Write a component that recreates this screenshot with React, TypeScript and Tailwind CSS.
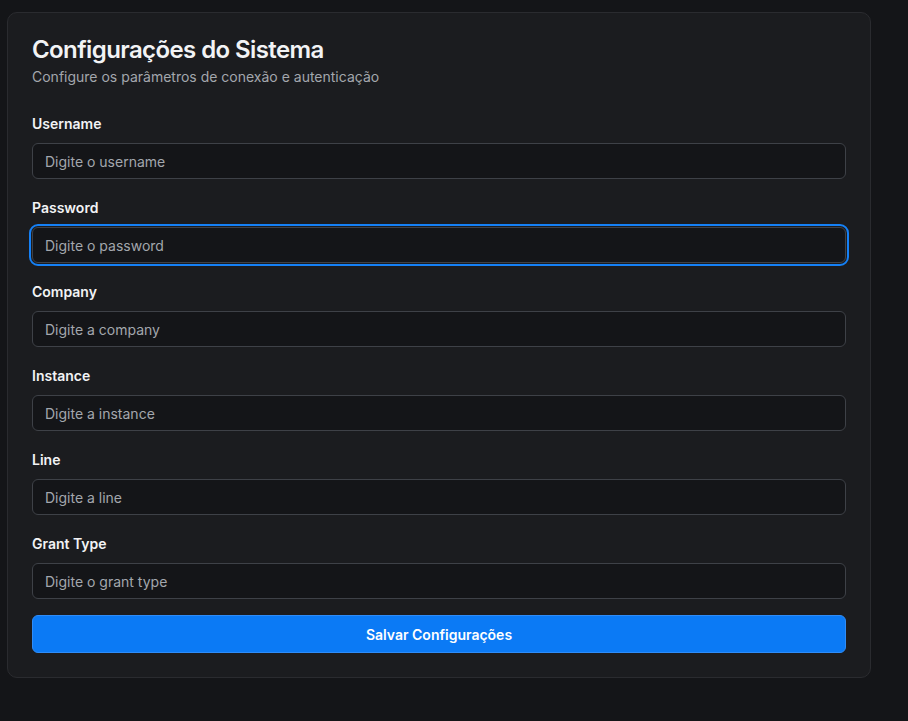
import React from "react";

const fields = [
  { label: "Username", ph: "Digite o username" },
  { label: "Password", ph: "Digite o password", focus: true },
  { label: "Company", ph: "Digite a company" },
  { label: "Instance", ph: "Digite a instance" },
  { label: "Line", ph: "Digite a line" },
  { label: "Grant Type", ph: "Digite o grant type" },
];

export default function App() {
  return (
    <div
      className="min-h-[721px] w-full bg-[#141518] pl-[7px] pt-3"
      style={{ fontFamily: "Inter, 'Noto Sans', sans-serif" }}
    >
      <div className="w-[864px] rounded-[10px] border border-[#2a2b2f] bg-[#1b1c1f] px-6 pb-6 pt-[22px]">
        <h1 className="text-[24px] font-semibold leading-[30px] tracking-tight text-[#f2f3f5]">
          Configurações do Sistema
        </h1>
        <p className="mt-[2px] text-[14px] leading-5 text-[#a3a7ad]">
          Configure os parâmetros de conexão e autenticação
        </p>
        <div className="mt-[26px] flex flex-col gap-[18px]">
          {fields.map((f) => (
            <div key={f.label} className="flex flex-col">
              <label className="mb-[9px] text-[14px] font-semibold leading-[21px] text-[#f2f3f5]">
                {f.label}
              </label>
              <div
                className={
                  "flex h-9 items-center rounded-md border border-[#3e4147] bg-[#141518] px-3 " +
                  (f.focus ? "outline-2 outline-offset-1 outline-[#1580f5] outline" : "")
                }
              >
                <span className="text-[14px] text-[#a3a7ad]">{f.ph}</span>
              </div>
            </div>
          ))}
        </div>
        <button className="mt-4 flex h-[38px] w-full items-center justify-center rounded-md border border-[#2f8cf7] bg-[#0b7af5] text-[14px] font-semibold text-white">
          Salvar Configurações
        </button>
      </div>
    </div>
  );
}
